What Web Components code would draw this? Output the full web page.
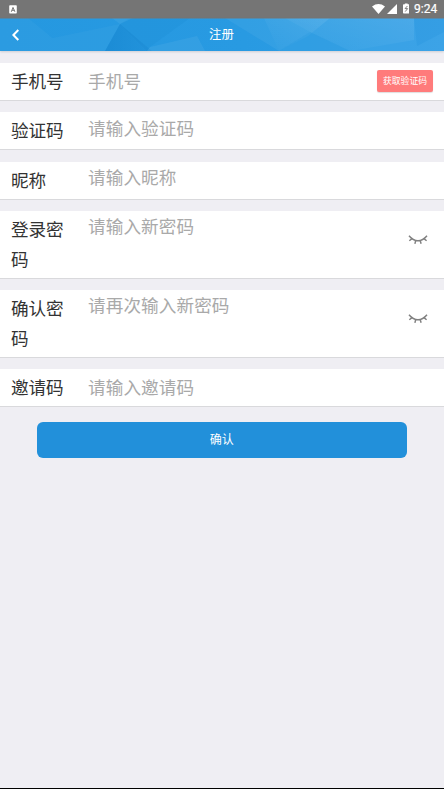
<!DOCTYPE html>
<html lang="zh-CN">
<head>
<meta charset="utf-8">
<title>注册</title>
<style>
html,body{margin:0;height:100%;overflow:hidden}
body{font-family:"Noto Sans CJK SC",sans-serif;background:#efeef3}
</style>
</head>
<body>
<register-page></register-page>
<script>
const define = (name, html, setup) => {
  const t = document.createElement('template');
  t.innerHTML = html;
  customElements.define(name, class extends HTMLElement {
    constructor() {
      super();
      this.attachShadow({mode: 'open'}).append(t.content.cloneNode(true));
    }
    connectedCallback() { if (setup) setup(this, this.shadowRoot); }
  });
};

define('status-bar', `
<style>
:host{display:flex;align-items:center;box-sizing:border-box;height:18px;background:#757575;padding:0 6px 0 9px;color:#fff}
svg{display:block;flex:none}
.gap{flex:1}
.wifi{margin-right:2px}.cell{margin-right:6px}.bat{margin:-1px 5px 0 0}
span{font:400 12px/18px Roboto,sans-serif;width:24px;white-space:nowrap;-webkit-text-stroke:.2px #fff}
</style>
<svg width="9" height="9" viewBox="0 0 9 9" style="margin-top:1px"><rect x=".2" y=".2" width="7.6" height="8.4" rx=".8" fill="#fff"/><path d="M2.3 6.8 4 2.4 5.9 6.8M3 5.3H5.5" fill="none" stroke="#777" stroke-width="1"/></svg>
<div class="gap"></div>
<svg class="wifi" width="13" height="10" viewBox="0 0 13 10"><path d="M0 2.5Q6.5-2.3 13 2.5L6.5 10Z" fill="#fff"/></svg>
<svg class="cell" width="10" height="10" viewBox="0 0 10 10"><path d="M10 0V10H0Z" fill="#fff"/></svg>
<svg class="bat" width="6.5" height="11" viewBox="0 0 7 11"><path d="M2 0H5V1H6.3Q7 1 7 1.8V10.2Q7 11 6.2 11H.8Q0 11 0 10.2V1.8Q0 1 .8 1H2Z" fill="#fff"/><path d="M4.8 2.8 2.2 5.6H5L2.4 8.8" fill="none" stroke="#757575" stroke-width="1"/></svg>
<span>9:24</span>`);

define('title-bar', `
<style>
:host{display:grid;height:33px;background:#2899e2;box-shadow:0 1px 2px #0002}
:host>*{grid-area:1/1}
.bg{display:block;width:100%;height:33px}
.row{display:grid;grid-template-columns:40px 1fr 41px;align-items:center;z-index:1;height:32px}
.row svg{margin:1px 0 0 11px}
h1{margin:0;text-align:center;font-size:12.4px;line-height:18px;font-weight:400;color:#fff}
</style>
<svg class="bg" viewBox="0 0 444 33" preserveAspectRatio="none">
<defs><linearGradient id="g"><stop offset="0" stop-color="#2598e0"/><stop offset=".55" stop-color="#289ae2"/><stop offset="1" stop-color="#329fe6"/></linearGradient>
<linearGradient id="d"><stop offset="0" stop-color="#1685cf" stop-opacity=".65"/><stop offset="1" stop-color="#1685cf" stop-opacity=".3"/></linearGradient>
<linearGradient id="w" x1="0" y1="1" x2="1" y2="0"><stop offset="0" stop-color="#fff" stop-opacity="0"/><stop offset="1" stop-color="#fff" stop-opacity=".08"/></linearGradient></defs>
<path fill="url(#g)" d="M0 0H444V33H0Z"/>
<path fill="#fff" fill-opacity=".03" d="M0 0H28L68 33H0ZM0 31 120 6 105 33H0Z"/>
<path fill="url(#d)" d="M120 6 152 33H105Z"/>
<path fill="#1685cf" fill-opacity=".18" d="M120 6 130 0H190L150 29 147 33Z"/>
<path fill="#fff" fill-opacity=".06" d="M112 0H133L120 6ZM150 29 197 18 205 33H147Z"/>
<path fill="#fff" fill-opacity=".05" d="M225 0H444V33H279Z"/>
<path fill="url(#w)" d="M264 0H330L308 18 279 33Z"/>
<path fill="#2496e0" fill-opacity=".25" d="M310 14 350 33H279Z"/>
<path fill="url(#w)" d="M285 0H414V22L350 33 310 14Z"/>
<path fill="#168ada" fill-opacity=".18" d="M414 0H444V14L417 28Z"/>
<path fill="#757575" fill-opacity=".5" d="M0 0H444V1H0Z"/>
</svg>
<div class="row">
<svg width="9" height="12" viewBox="0 0 9 12"><path d="M7.3 1 2.4 6 7.3 11" fill="none" stroke="#fff" stroke-width="2"/></svg>
<h1><slot></slot></h1></div>`);

define('closed-eye', `
<style>:host{display:block;width:20px;height:10px}svg{display:block}</style>
<svg width="20" height="10" viewBox="0 0 20 10" fill="none" stroke="#808080" stroke-width="1.45"><path d="M1 .8Q5.2 5.8 10 5.8T19 .8M4.1 3.6 1.3 5.8M7.7 5.5 6.9 8.8M12.2 5.5 13.1 8.8M15.9 3.6 18.6 5.8"/></svg>`);

define('form-field', `
<style>
:host{display:grid;grid-template-columns:54px 1fr auto;column-gap:23px;align-items:start;box-sizing:border-box;
height:var(--h,38px);padding:3px 11px 0 11px;background:#fff;border-bottom:1px solid #d9d9dc;
font-size:17.6px;line-height:29.5px}
label{color:#333;letter-spacing:-.1px}
.ph{color:#a9a9a9;margin-top:var(--dy,0px);white-space:nowrap;letter-spacing:.1px}
</style>
<label></label><div class="ph"></div><slot></slot>`, (el, root) => {
  root.querySelector('label').textContent = el.getAttribute('label');
  root.querySelector('.ph').textContent = el.getAttribute('hint');
});

define('code-button', `
<style>
:host{display:block;box-sizing:border-box;width:56px;height:22px;margin-top:4px;border-radius:2px;background:#ff7b7b;
color:#fff;font-size:8.8px;line-height:22px;text-align:center;white-space:nowrap;box-shadow:0 1px 1px #0002}
</style><slot></slot>`);

define('submit-button', `
<style>
:host{display:block;height:35.5px;margin:15.5px 37.5px 0 37px;border-radius:6px;background:#2290da;color:#fff;
font-size:12px;line-height:34px;text-align:center}
</style><slot></slot>`);

define('register-page', `
<style>
:host{display:flex;flex-direction:column;box-sizing:border-box;height:100vh;background:#efeef3;border-bottom:1px solid #000}
form{display:flex;flex-direction:column;margin:0;padding-top:12px}
.list{display:grid;row-gap:11.4px}
closed-eye{margin:21px 5px 0 0}
</style>
<status-bar></status-bar>
<title-bar>注册</title-bar>
<form>
<div class="list">
<form-field label="手机号" hint="手机号"><code-button>获取验证码</code-button></form-field>
<form-field label="验证码" hint="请输入验证码" style="--dy:-2.6px"></form-field>
<form-field label="昵称" hint="请输入昵称" style="--dy:-3px"></form-field>
<form-field label="登录密码" hint="请输入新密码" style="--h:67.5px;--dy:-3px"><closed-eye></closed-eye></form-field>
<form-field label="确认密码" hint="请再次输入新密码" style="--h:67.5px;--dy:-3px"><closed-eye></closed-eye></form-field>
<form-field label="邀请码" hint="请输入邀请码"></form-field>
</div>
<submit-button>确认</submit-button>
</form>`);
</script>
</body>
</html>
